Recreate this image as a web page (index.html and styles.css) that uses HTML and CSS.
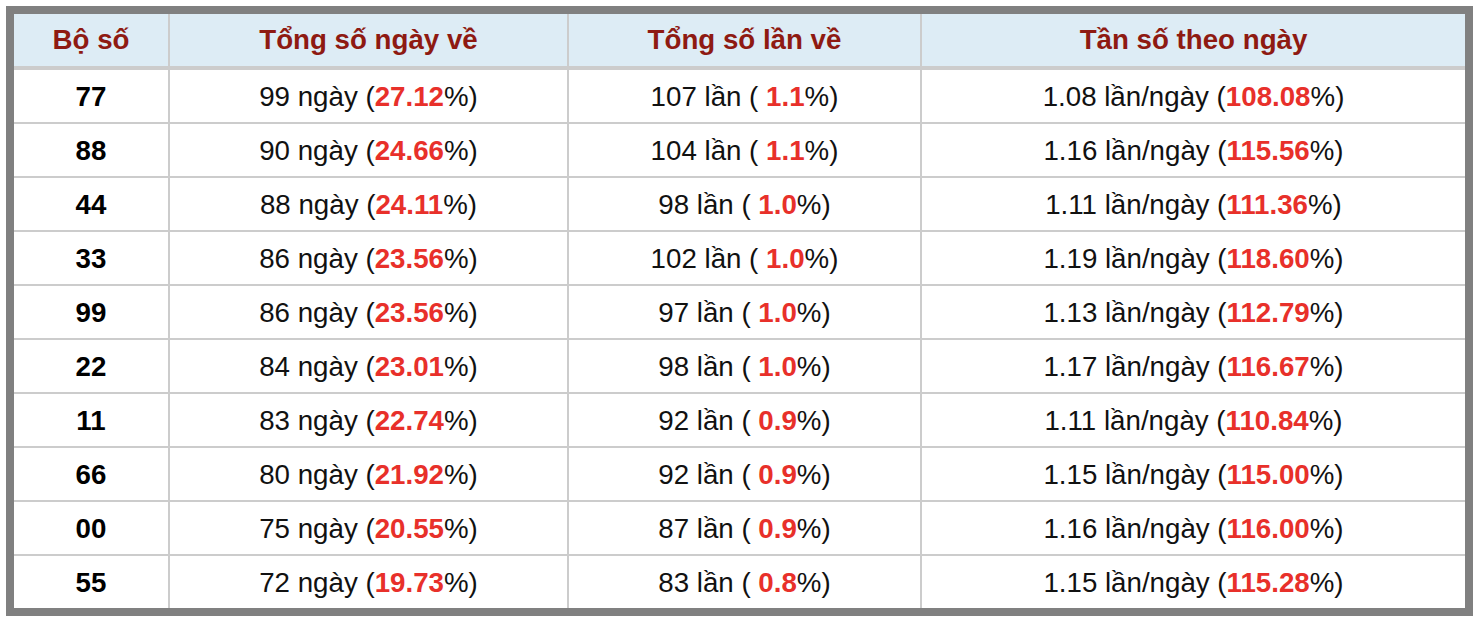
FILE: index.html
```html
<!DOCTYPE html>
<html lang="vi">
<head>
<meta charset="utf-8">
<title>Thống kê bộ số</title>
<link rel="stylesheet" href="styles.css">
</head>
<body>
<div class="frame">
  <div class="grid">
    <div class="cell head">Bộ số</div>
    <div class="cell head">Tổng số ngày về</div>
    <div class="cell head">Tổng số lần về</div>
    <div class="cell head">Tần số theo ngày</div>

    <div class="cell num">77</div>
    <div class="cell">99 ngày (<b class="hl">27.12</b>%)</div>
    <div class="cell">107 lần (&nbsp;<b class="hl">1.1</b>%)</div>
    <div class="cell">1.08 lần/ngày (<b class="hl">108.08</b>%)</div>

    <div class="cell num">88</div>
    <div class="cell">90 ngày (<b class="hl">24.66</b>%)</div>
    <div class="cell">104 lần (&nbsp;<b class="hl">1.1</b>%)</div>
    <div class="cell">1.16 lần/ngày (<b class="hl">115.56</b>%)</div>

    <div class="cell num">44</div>
    <div class="cell">88 ngày (<b class="hl">24.11</b>%)</div>
    <div class="cell">98 lần (&nbsp;<b class="hl">1.0</b>%)</div>
    <div class="cell">1.11 lần/ngày (<b class="hl">111.36</b>%)</div>

    <div class="cell num">33</div>
    <div class="cell">86 ngày (<b class="hl">23.56</b>%)</div>
    <div class="cell">102 lần (&nbsp;<b class="hl">1.0</b>%)</div>
    <div class="cell">1.19 lần/ngày (<b class="hl">118.60</b>%)</div>

    <div class="cell num">99</div>
    <div class="cell">86 ngày (<b class="hl">23.56</b>%)</div>
    <div class="cell">97 lần (&nbsp;<b class="hl">1.0</b>%)</div>
    <div class="cell">1.13 lần/ngày (<b class="hl">112.79</b>%)</div>

    <div class="cell num">22</div>
    <div class="cell">84 ngày (<b class="hl">23.01</b>%)</div>
    <div class="cell">98 lần (&nbsp;<b class="hl">1.0</b>%)</div>
    <div class="cell">1.17 lần/ngày (<b class="hl">116.67</b>%)</div>

    <div class="cell num">11</div>
    <div class="cell">83 ngày (<b class="hl">22.74</b>%)</div>
    <div class="cell">92 lần (&nbsp;<b class="hl">0.9</b>%)</div>
    <div class="cell">1.11 lần/ngày (<b class="hl">110.84</b>%)</div>

    <div class="cell num">66</div>
    <div class="cell">80 ngày (<b class="hl">21.92</b>%)</div>
    <div class="cell">92 lần (&nbsp;<b class="hl">0.9</b>%)</div>
    <div class="cell">1.15 lần/ngày (<b class="hl">115.00</b>%)</div>

    <div class="cell num">00</div>
    <div class="cell">75 ngày (<b class="hl">20.55</b>%)</div>
    <div class="cell">87 lần (&nbsp;<b class="hl">0.9</b>%)</div>
    <div class="cell">1.16 lần/ngày (<b class="hl">116.00</b>%)</div>

    <div class="cell num last">55</div>
    <div class="cell last">72 ngày (<b class="hl">19.73</b>%)</div>
    <div class="cell last">83 lần (&nbsp;<b class="hl">0.8</b>%)</div>
    <div class="cell last">1.15 lần/ngày (<b class="hl">115.28</b>%)</div>
  </div>
</div>
</body>
</html>
```

FILE: styles.css
```css
html, body {
  margin: 0;
  padding: 0;
  background: #ffffff;
}

body {
  padding: 6px;
  font-family: "Liberation Sans", Arial, Helvetica, sans-serif;
  color: #111111;
}

.frame {
  width: 1467px;
  box-sizing: border-box;
  border: 8px solid #808080;
  background: #ffffff;
}

.grid {
  display: grid;
  grid-template-columns: 156px 399px 353px 543px;
}

.cell {
  box-sizing: border-box;
  height: 54px;
  padding-top: 2px;
  display: flex;
  align-items: center;
  justify-content: center;
  font-size: 27.7px;
  white-space: nowrap;
  border-right: 2px solid #cccccc;
  border-bottom: 2px solid #cccccc;
}

.cell:nth-child(4n) {
  border-right: none;
}

.cell.last {
  height: 52px;
  border-bottom: none;
}

.head {
  height: 56px;
  padding-top: 0;
  background: #ddecf5;
  color: #8e1a12;
  font-weight: bold;
  border-bottom: 4px solid #cccccc;
}

.num {
  font-weight: bold;
  color: #000000;
}

.hl {
  color: #e8302a;
  font-weight: bold;
}
```
